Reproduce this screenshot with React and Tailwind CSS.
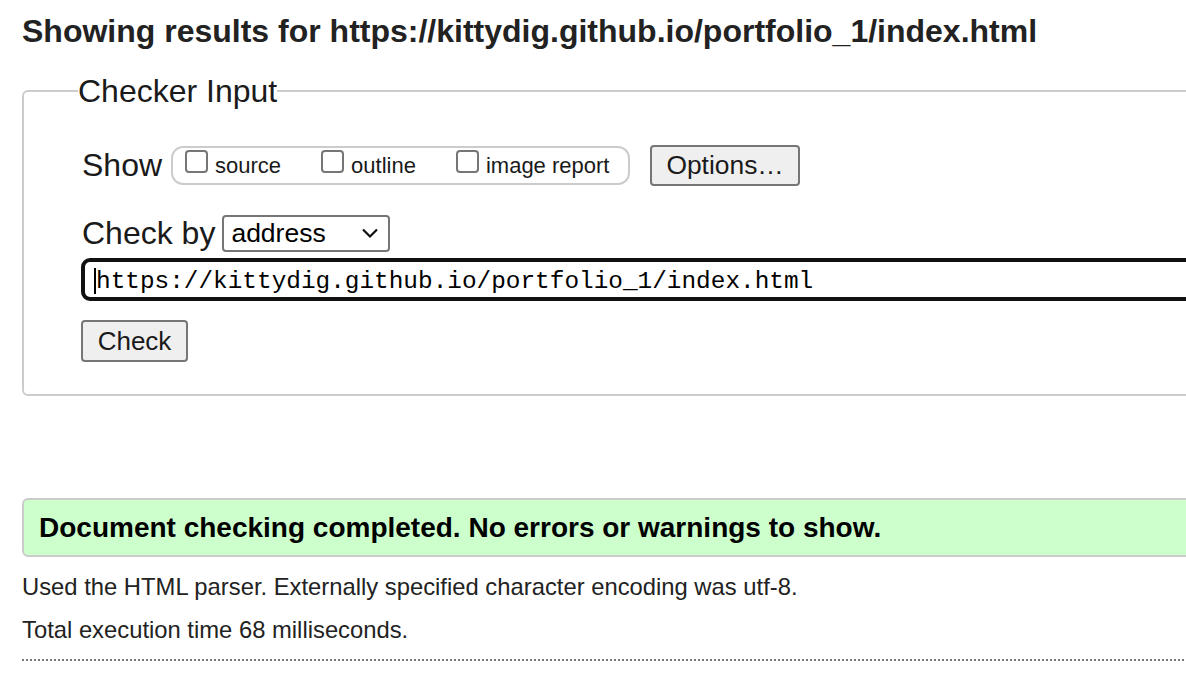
import React from 'react'

const SANS = { fontFamily: '"Liberation Sans", Arial, sans-serif' }

function Box() {
  return <span className="inline-block w-[23px] h-[23px] border-2 border-[#767676] rounded-[4px] bg-white shrink-0" />
}

function Option({ label, className = '' }) {
  return (
    <label className={`flex items-center gap-[7px] ${className}`}>
      <Box />
      <span className="text-[22px] leading-none mt-[10px]">{label}</span>
    </label>
  )
}

export default function App() {
  return (
    <div className="w-[1186px] h-[694px] overflow-hidden bg-white text-[#1a1a1a]" style={SANS}>
      <div className="w-[1240px] pl-[22px] pt-[12px]">
        <h2 className="text-[32px] font-bold leading-[38px] text-[#222]">
          Showing results for https://kittydig.github.io/portfolio_1/index.html
        </h2>

        {/* Checker input */}
        <fieldset className="mt-[25px] h-[321px] border-2 border-[#cccccc] rounded-[6px]">
          <legend className="ml-[54px] px-0 text-[32px] leading-[32px]">Checker Input</legend>

          <div className="pl-[58px]">
            <div className="flex items-center mt-[38px] h-[40px]">
              <span className="text-[32px] mr-[9px]">Show</span>
              <div className="flex items-center h-[39px] w-[459px] border-2 border-[#cccccc] rounded-[12px] pl-[12px] pb-[8px]">
                <Option label="source" />
                <Option label="outline" className="ml-[40px]" />
                <Option label="image report" className="ml-[40px]" />
              </div>
              <button className="ml-[20px] h-[41px] w-[150px] bg-[#efefef] border-2 border-[#767676] rounded-[4px] text-[26.4px] leading-none">
                Options…
              </button>
            </div>

            <div className="flex items-center mt-[29px] h-[38px]">
              <span className="text-[32px] mr-[7px]">Check by</span>
              <div className="flex items-center justify-between h-[37px] w-[168px] border-2 border-[#767676] rounded-[4px] pl-[7px] pr-[8px]">
                <span className="text-[26.5px] leading-none text-black">address</span>
                <svg width="20" height="12" viewBox="0 0 20 12" fill="none" stroke="#111" strokeWidth="2.2">
                  <path d="M3 2.5l7 7 7-7" />
                </svg>
              </div>
            </div>

            <div className="flex items-center mt-[6px] h-[43px] border-[4px] border-[#111] rounded-[9px] pl-[9px] -ml-px">
              <span className="w-[2px] h-[26px] bg-black mt-[2px]" />
              <span className="text-[24.4px] text-black leading-none mt-[5px]" style={{ fontFamily: '"Liberation Mono", "DejaVu Sans Mono", monospace' }}>
                https://kittydig.github.io/portfolio_1/index.html
              </span>
            </div>

            <button className="mt-[19px] -ml-px h-[42px] w-[107px] bg-[#efefef] border-2 border-[#767676] rounded-[4px] text-[26px] leading-none">
              Check
            </button>
          </div>
        </fieldset>

        {/* Result */}
        <div className="mt-[102px] h-[59px] flex items-center border-2 border-[#cccccc] rounded-[6px] bg-[#ccffcc] pl-[15px]">
          <span className="text-[28px] font-bold text-black">Document checking completed. No errors or warnings to show.</span>
        </div>

        <p className="mt-[15px] text-[23.8px] leading-[30px] text-[#222]">
          Used the HTML parser. Externally specified character encoding was utf-8.
        </p>
        <p className="mt-[13px] text-[23.8px] leading-[30px] text-[#222]">Total execution time 68 milliseconds.</p>
        <div className="mt-[14px] border-t-2 border-dotted border-[#777]" />
      </div>
    </div>
  )
}
